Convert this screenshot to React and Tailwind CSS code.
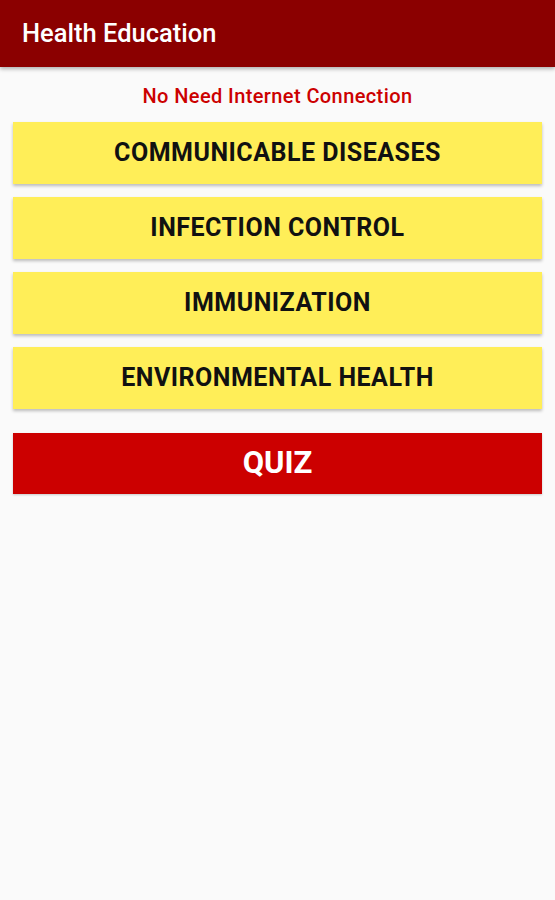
import React from 'react';

const topics = ['COMMUNICABLE DISEASES', 'INFECTION CONTROL', 'IMMUNIZATION', 'ENVIRONMENTAL HEALTH'];

export default function App() {
  return (
    <div className="min-h-[900px] bg-[#fafafa] font-['Roboto',sans-serif]">
      <header className="h-[67px] bg-[#8b0000] flex items-center px-[22px] shadow-[0_2px_4px_rgba(0,0,0,0.3)]">
        <h1 className="text-white text-[25.5px] font-medium">Health Education</h1>
      </header>

      <div className="px-[13px]">
        <p className="text-center text-[#cc0000] text-[20px] font-medium tracking-[0.4px] leading-none pt-[19px] pb-[16px]">
          No Need Internet Connection
        </p>

        <div className="flex flex-col gap-[13px]">
          {topics.map((t) => (
            <button
              key={t}
              className="h-[62px] w-full bg-[#ffee58] text-[#111] text-[25px] font-bold tracking-[0.5px] shadow-[0_2px_3px_rgba(0,0,0,0.25)]"
            >
              {t}
            </button>
          ))}
        </div>

        <button className="mt-[24px] h-[61px] w-full bg-[#cc0000] text-white text-[31px] font-bold shadow-[0_1px_2px_rgba(0,0,0,0.2)]">
          QUIZ
        </button>
      </div>
    </div>
  );
}
